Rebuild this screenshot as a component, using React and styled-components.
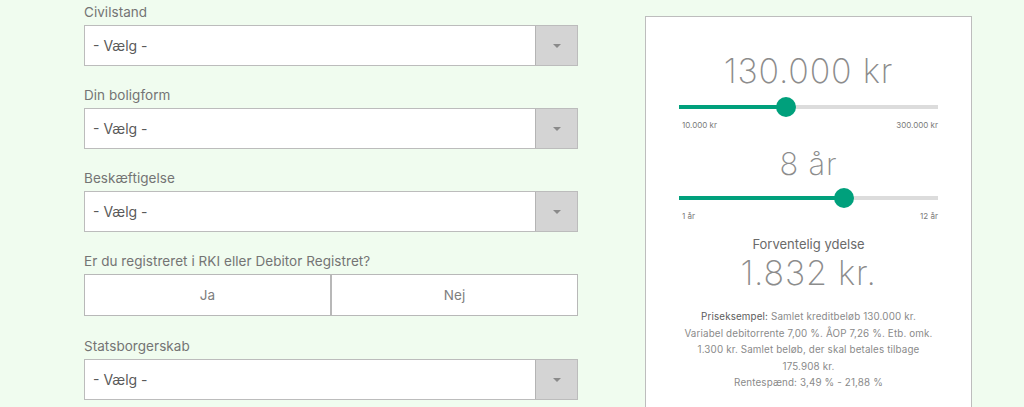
import React from "react";
import styled, { createGlobalStyle } from "styled-components";

const Global = createGlobalStyle`
  html, body { margin: 0; padding: 0; }
  body {
    background: #f0fcef;
    font-family: "Inter", "Lato", "Liberation Sans", sans-serif;
    overflow: hidden;
  }
`;

const Page = styled.div`
  display: flex;
  align-items: flex-start;
  padding-left: 84px;
  gap: 67px;
  height: 407px;
  overflow: hidden;
`;

const FormColumn = styled.div`
  width: 494px;
  display: flex;
  flex-direction: column;
  padding-top: 2px;
`;

const Field = styled.div`
  display: flex;
  flex-direction: column;
  margin-bottom: ${(p) => p.$mb ?? 19}px;
`;

const Label = styled.div`
  font-size: 13.5px;
  line-height: 20px;
  color: #747474;
  margin-bottom: 3px;
  letter-spacing: 0.05px;
`;

const SelectBox = styled.div`
  display: flex;
  height: 41px;
  box-sizing: border-box;
  border: 1px solid #bcbcbc;
  background: #fff;
`;

const SelectText = styled.div`
  flex: 1;
  display: flex;
  align-items: center;
  padding-left: 8px;
  font-size: 14px;
  color: #5a5a5a;
`;

const Arrow = styled.div`
  width: 41px;
  background: #d4d4d4;
  border-left: 1px solid #b4b4b4;
  display: flex;
  align-items: center;
  justify-content: center;
  &::after {
    content: "";
    width: 0;
    height: 0;
    border-left: 4px solid transparent;
    border-right: 4px solid transparent;
    border-top: 4px solid #8a8a8a;
  }
`;

const ToggleRow = styled.div`
  display: flex;
  height: 42px;
`;

const Toggle = styled.div`
  flex: 1;
  box-sizing: border-box;
  border: 1px solid #b8b8b8;
  background: #fff;
  display: flex;
  align-items: center;
  justify-content: center;
  font-size: 13.5px;
  color: #7e7e7e;
`;

const Panel = styled.div`
  margin-top: 16px;
  width: 327px;
  box-sizing: border-box;
  height: 420px;
  background: #fff;
  border: 1px solid #bdbdbd;
  padding: 34px 33px 0;
  display: flex;
  flex-direction: column;
  align-items: stretch;
`;

const BigValue = styled.div`
  text-align: center;
  font-weight: 200;
  font-size: ${(p) => p.$size}px;
  line-height: 40px;
  color: #8c8c8c;
  letter-spacing: ${(p) => p.$ls ?? 0.8}px;
  margin-bottom: ${(p) => p.$mb ?? 0}px;
`;

const SliderWrap = styled.div`
  position: relative;
  height: 20px;
  display: flex;
  align-items: center;
`;

const Track = styled.div`
  width: 100%;
  height: 4px;
  background: #dcdcdc;
  display: flex;
`;

const Fill = styled.div`
  height: 100%;
  background: #00a07c;
`;

const Thumb = styled.div`
  position: absolute;
  top: 0;
  width: 20px;
  height: 20px;
  margin-left: -10px;
  border-radius: 50%;
  background: #00a07c;
`;

const Ends = styled.div`
  display: flex;
  justify-content: space-between;
  font-size: 8px;
  line-height: 10px;
  color: #7a7a7a;
  padding: 0 0 0 3px;
  margin-top: 3px;
  margin-bottom: ${(p) => p.$mb ?? 0}px;
`;

const SubTitle = styled.div`
  text-align: center;
  font-size: 13px;
  line-height: 18px;
  color: #6a6a6a;
  margin-top: 14px;
`;

const Note = styled.div`
  text-align: center;
  font-size: 9.8px;
  line-height: 16.5px;
  letter-spacing: 0.15px;
  color: #8a8a8a;
  margin-top: 16px;
  white-space: nowrap;
`;

const Strong = styled.span`
  color: #5c5c5c;
`;

function Slider({ pct }) {
  return (
    <SliderWrap>
      <Track>
        <Fill style={{ width: `${pct}%` }} />
      </Track>
      <Thumb style={{ left: `${pct}%` }} />
    </SliderWrap>
  );
}

function Select({ label }) {
  return (
    <Field>
      <Label>{label}</Label>
      <SelectBox>
        <SelectText>- Vælg -</SelectText>
        <Arrow />
      </SelectBox>
    </Field>
  );
}

export default function App() {
  return (
    <>
      <Global />
      <Page>
        <FormColumn>
          <Select label="Civilstand" />
          <Select label="Din boligform" />
          <Select label="Beskæftigelse" />
          <Field $mb={20}>
            <Label>Er du registreret i RKI eller Debitor Registret?</Label>
            <ToggleRow>
              <Toggle>Ja</Toggle>
              <Toggle>Nej</Toggle>
            </ToggleRow>
          </Field>
          <Select label="Statsborgerskab" />
        </FormColumn>
        <Panel>
          <BigValue $size={34} $mb={6}>130.000 kr</BigValue>
          <Slider pct={((130000 - 10000) / 290000) * 100} />
          <Ends $mb={14}>
            <span>10.000 kr</span>
            <span>300.000 kr</span>
          </Ends>
          <BigValue $size={31} $mb={4}>8 år</BigValue>
          <Slider pct={((8 - 1) / 11) * 100} />
          <Ends>
            <span>1 år</span>
            <span>12 år</span>
          </Ends>
          <SubTitle>Forventelig ydelse</SubTitle>
          <BigValue $size={34}>1.832 kr.</BigValue>
          <Note>
            <Strong>Priseksempel:</Strong> Samlet kreditbeløb 130.000 kr.
            <br />
            Variabel debitorrente 7,00 %. ÅOP 7,26 %. Etb. omk.
            <br />
            1.300 kr. Samlet beløb, der skal betales tilbage
            <br />
            175.908 kr.
            <br />
            Rentespænd: 3,49 % - 21,88 %
          </Note>
        </Panel>
      </Page>
    </>
  );
}
